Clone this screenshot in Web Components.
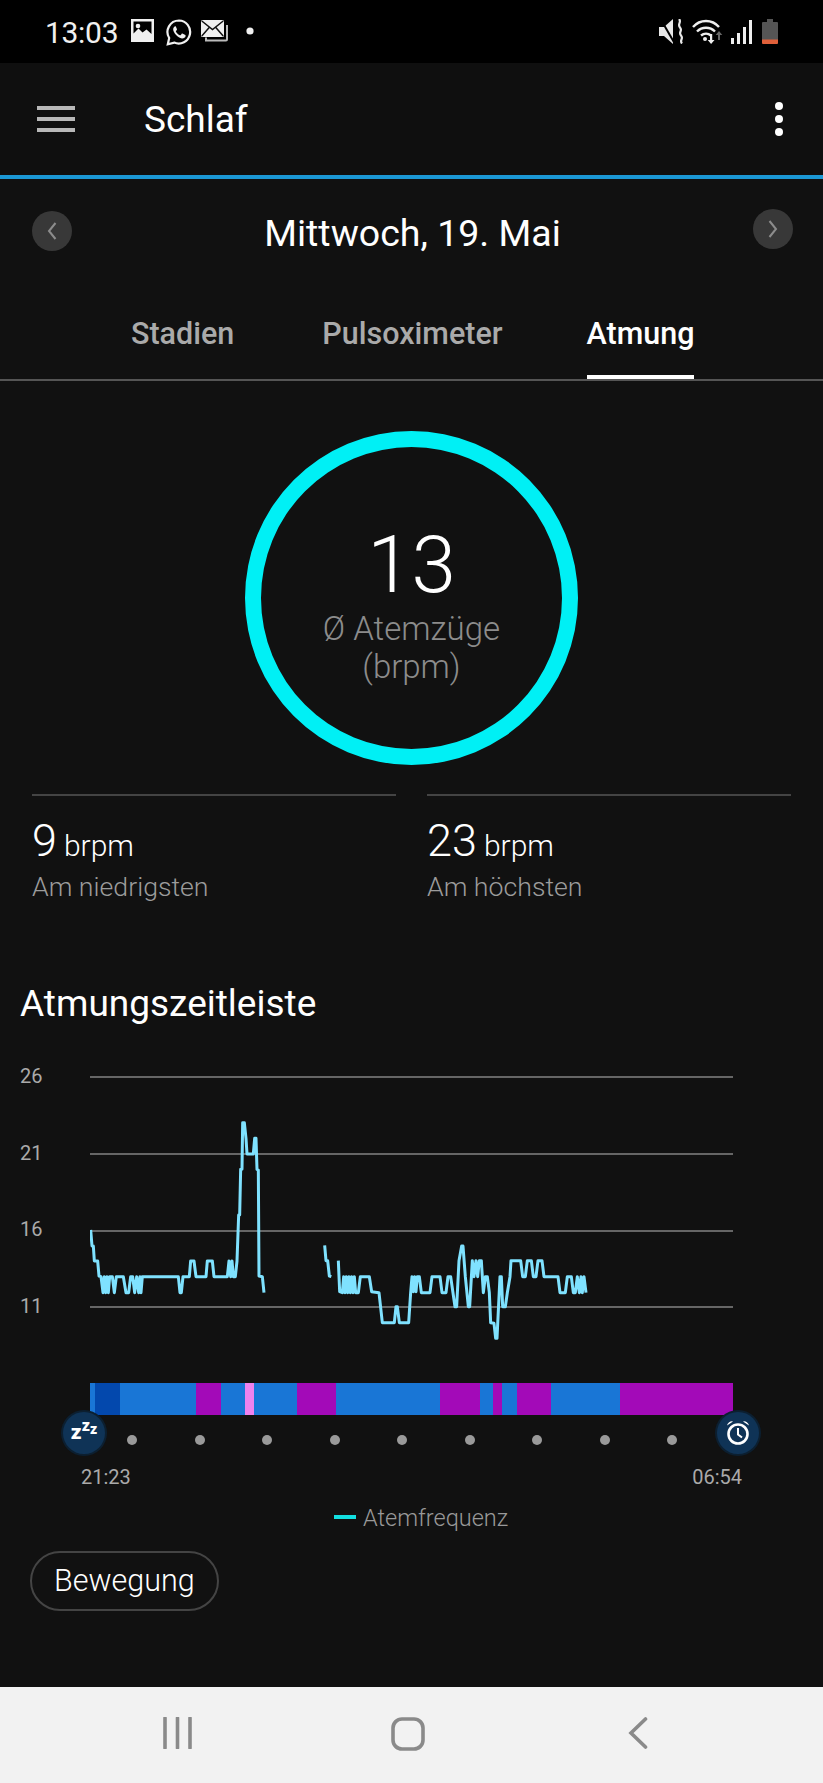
<!DOCTYPE html>
<html lang="de">
<head>
<meta charset="utf-8">
<title>Schlaf</title>
<style>
html,body{margin:0;padding:0;background:#111;}
body{width:823px;height:1783px;overflow:hidden;display:flex;flex-direction:column;font-family:Roboto,"Liberation Sans",sans-serif;color:#fff;}
</style>
</head>
<body>
<status-bar></status-bar>
<app-header title="Schlaf"></app-header>
<date-nav>Mittwoch, 19. Mai</date-nav>
<tab-bar></tab-bar>
<ring-summary value="13"><span>Ø Atemzüge</span><span>(brpm)</span></ring-summary>
<stat-pair></stat-pair>
<timeline-chart></timeline-chart>
<sleep-rail></sleep-rail>
<chart-legend>Atemfrequenz</chart-legend>
<chip-button>Bewegung</chip-button>
<nav-bar></nav-bar>
<script>
function def(name, html){
  customElements.define(name, class extends HTMLElement{
    constructor(){super();const r=this.attachShadow({mode:'open'});r.innerHTML=typeof html==='function'?html(this):html;}
  });
}
def('status-bar',`<style>
:host{display:flex;height:63px;background:#000;align-items:center;box-sizing:border-box;padding:0 45px 0 45px;flex:none;color:#f0f0f0}
.t{font-size:30px;line-height:62px;font-weight:400;letter-spacing:-.3px;width:86px;position:relative;top:1px}
svg{display:block;flex:none}
.sp{flex:1}
</style>
<span class="t">13:03</span>
<svg width="23" height="23" viewBox="0 0 23 23" style="margin-right:12px;margin-top:-2px"><path fill="#f0f0f0" fill-rule="evenodd" d="M0 0h23v23H0zM2.500 2.500v12l5-5 4 4 4-3 5 4.500V2.500z"/><circle cx="7" cy="7" r="2.300" fill="#f0f0f0"/></svg>
<svg width="26" height="27" viewBox="0 0 26 27" style="margin-right:9px;margin-top:1px"><path fill="none" stroke="#f0f0f0" stroke-width="2.200" d="M13 1.500a11.500 11.500 0 0 0-9.800 17.500L1.800 25.300l6.400-1.700A11.500 11.500 0 1 0 13 1.500z"/><path fill="#f0f0f0" d="M9 7.200c-.8.300-2 1.700-1.800 3.600.3 3.200 4.600 8 8.700 8.600 1.800.2 3.300-1 3.600-2 .2-.7.100-1.200-.1-1.300l-3-1.500c-.4-.1-.6 0-.8.300l-1 1.300c-.2.200-.4.200-.7.100-1.500-.6-3.300-2.200-4-3.800-.1-.3-.1-.5.100-.6l.8-1c.2-.3.200-.5.100-.8L9.800 7.500c-.2-.3-.4-.4-.8-.3z"/></svg>
<svg width="28" height="22" viewBox="0 0 28 22" style="margin-top:-1px"><path fill="none" stroke="#bbb" stroke-width="2" d="M26 5v14.500a1 1 0 0 1-1 1H5v-3"/><path fill="#f0f0f0" d="M0 1.500A1.500 1.500 0 0 1 1.500 0h20A1.500 1.500 0 0 1 23 1.500v14a1.500 1.500 0 0 1-1.500 1.500h-20A1.500 1.500 0 0 1 0 15.500z"/><path fill="none" stroke="#111" stroke-width="1.500" d="M.8 1l10.700 8.500L22.200 1M.8 16l7.400-8.500M22.200 16l-7.400-8.500"/></svg>
<svg width="8" height="8" viewBox="0 0 8 8" style="margin-left:17px;margin-top:-2px"><circle cx="4" cy="4" r="3.600" fill="#f0f0f0"/></svg>
<span class="sp"></span>
<svg width="25" height="25" viewBox="0 0 25 25" style="margin-right:8px"><path fill="#e8e8e8" d="M0 8h5l9-8v25l-9-8H0z"/><path fill="none" stroke="#000" stroke-width="2" d="M1-1l15 26"/><path fill="none" stroke="#e8e8e8" stroke-width="2.200" d="M20 0c3 3-2 5 1 8.500s-2 4.500 1 8-2 4.500 1 8"/></svg>
<svg width="31" height="25" viewBox="0 0 31 25" style="margin-right:8px"><g fill="none" stroke="#eee" stroke-width="2.400"><path d="M1 8c7-8 19-8 26 0"/><path d="M5 12.500c5-5 13-5 18 0"/><path d="M9 16.500c3-2.500 7-2.500 10 0"/></g><circle cx="13" cy="20" r="2" fill="#eee"/><path fill="#eee" d="M18 15h2.200v6h2.300l-3.400 4-3.400-4H18z"/><path fill="#666" d="M26 21v-5h-2.300l3.300-4 3.300 4H28v5z"/></svg>
<svg width="22" height="24" viewBox="0 0 22 24" style="margin-right:9px"><g fill="#eee"><rect x="0" y="18" width="3" height="6"/><rect x="6" y="13" width="3" height="11"/><rect x="12" y="7" width="3" height="17"/><rect x="18" y="0" width="3" height="24"/></g></svg>
<svg width="16" height="25" viewBox="0 0 16 25"><path fill="#555" d="M5 0h6v3h4a1 1 0 0 1 1 1v17H0V4a1 1 0 0 1 1-1h4z"/><path fill="#e0603a" d="M0 20.500h16V24a1 1 0 0 1-1 1H1a1 1 0 0 1-1-1z"/></svg>`);
def('app-header',h=>`<style>
:host{display:flex;height:112px;background:#0f0f0f;border-bottom:4px solid #1b98d5;align-items:center;flex:none;padding-left:37px;padding-right:38px}
.m{width:38px;height:26px;display:flex;flex-direction:column;justify-content:space-between;margin-top:0}
.m i{display:block;height:4px;background:#b8b8b8}
h1{font:400 37px/48px Roboto,sans-serif;margin:0 0 0 69px;flex:1;color:#fff;position:relative;top:1px}
.d{display:flex;flex-direction:column;gap:5px;width:10px;margin-top:0}
.d i{display:block;width:8px;height:8px;border-radius:50%;background:#fff}
</style>
<span class="m"><i></i><i></i><i></i></span>
<h1>${h.getAttribute('title')}</h1>
<span class="d"><i></i><i></i><i></i></span>`);
def('date-nav',`<style>
:host{display:flex;height:91px;align-items:center;justify-content:space-between;padding:0 30px 0 32px;flex:none;box-sizing:border-box;background:#111}
.b{width:40px;height:40px;border-radius:50%;background:#383838;display:flex;align-items:center;justify-content:center}
.p{margin-top:12px}.n{margin-top:8px}
.x{font:400 37.500px/46px Roboto,sans-serif;color:#fff;margin-top:16px;position:relative;left:0}
svg{display:block}
</style>
<span class="b p"><svg width="12" height="20" viewBox="0 0 12 20"><path d="M9.500 2L3 10l6.500 8" fill="none" stroke="#8c8c8c" stroke-width="2"/></svg></span>
<span class="x"><slot></slot></span>
<span class="b n"><svg width="12" height="20" viewBox="0 0 12 20"><path d="M2.500 2L9 10l-6.500 8" fill="none" stroke="#8c8c8c" stroke-width="2"/></svg></span>`);
def('tab-bar',`<style>
:host{display:flex;height:111px;box-sizing:border-box;border-bottom:2px solid #555;flex:none;position:relative;padding-left:131px}
.t{font:500 30.500px/36px Roboto,sans-serif;color:#aaa;padding-top:46px;box-sizing:border-box;height:109px}
.a{color:#fff;border-bottom:4px solid #fff}
.s1{margin-right:88px}
.s2{margin-right:84px}
</style>
<span class="t s1">Stadien</span><span class="t s2">Pulsoximeter</span><span class="t a">Atmung</span>`);
def('ring-summary',h=>`<style>
:host{display:flex;justify-content:center;flex:none;padding-top:50px}
.r{width:333px;height:334px;border:16px solid #00f0f5;border-radius:50%;box-sizing:border-box;display:flex;flex-direction:column;align-items:center}
.v{font:300 80px/94px Roboto,sans-serif;color:#fff;margin-top:71px}
.l{display:flex;flex-direction:column;align-items:center;font:300 33px/37.500px Roboto,sans-serif;color:#8c8c8c;margin-top:-2px}
::slotted(span){display:block}
</style>
<div class="r"><div class="v">${h.getAttribute('value')}</div><div class="l"><slot></slot></div></div>`);
def('stat-pair',`<style>
:host{display:flex;gap:31px;padding:29px 32px 0;flex:none}
.c{flex:1;border-top:2px solid #444;padding-top:18px}
.n{font:300 45px/54px Roboto,sans-serif;color:#fff;display:flex;align-items:baseline;gap:7px;height:54px}
.n span{font-size:30px;line-height:30px}
.s{font:300 26.700px/32px Roboto,sans-serif;color:#9c9c9c;margin-top:3px}
</style>
<div class="c"><div class="n"><b style="font-weight:300">9</b><span>brpm</span></div><div class="s">Am niedrigsten</div></div>
<div class="c"><div class="n"><b style="font-weight:300">23</b><span>brpm</span></div><div class="s">Am höchsten</div></div>`);
def('timeline-chart',`<style>
:host{display:flex;flex-direction:column;flex:none;padding-top:79px}
h2{font:400 37px/44px Roboto,sans-serif;margin:0 0 0 20px;color:#fff;height:44px}
.g{display:grid;grid-template-columns:90px 643px;height:323px;margin-top:34px}
.y{display:flex;flex-direction:column;gap:56.700px;padding:6px 0 0 20px;font:400 20px/20px Roboto,sans-serif;color:#aaa}
svg{display:block}
</style>
<h2>Atmungszeitleiste</h2>
<div class="g"><div class="y"><span>26</span><span>21</span><span>16</span><span>11</span></div>
<svg width="643" height="323" viewBox="90 1060 643 323">
<g stroke="#666" stroke-width="2"><path d="M90 1077H733M90 1154H733M90 1231H733M90 1307H733"/></g>
<g transform="translate(0 1040) scale(.33333)" fill="none" stroke="#7fe2ff" stroke-width="9" stroke-linejoin="round">
<polyline points="272,570 276,618 280,618 283,663 293,663 297,708 303,710 309,758 313,710 317,758 321,710 325,758 329,710 337,710 343,758 349,710 370,710 378,758 386,758 392,710 398,710 404,758 410,710 416,758 420,710 423,758 427,710 535,710 540,758 544,758 549,710 568,710 572,663 582,663 588,710 618,710 622,663 637,663 642,710 682,710 687,663 692,710 696,663 700,710 706,710 711,663 716,525 719,525 722,388 726,388 728,248 733,248 738,295 741,342 760,342 764,295 768,295 771,388 775,390 777,708 787,710 792,758"/>
<polyline points="974,616 978,662 983,662 988,708 994,710"/>
<polyline points="1015,662 1019,755 1027,758 1031,710 1035,758 1039,710 1043,758 1047,710 1051,758 1055,710 1059,758 1063,710 1067,758 1075,758 1081,710 1108,710 1115,755 1137,758 1147,848 1183,848 1188,800 1192,800 1198,848 1226,848 1232,758 1236,710 1240,755 1244,710 1248,755 1252,710 1258,710 1264,758 1290,758 1296,710 1320,710 1326,758 1338,758 1344,710 1352,710 1365,800 1370,800 1377,662 1385,618 1389,618 1396,710 1405,800 1409,800 1417,662 1422,710 1428,662 1433,710 1438,662 1444,662 1450,758 1456,710 1462,710 1468,758 1472,848 1482,850 1487,895 1491,895 1500,710 1504,710 1508,800 1516,800 1522,758 1530,710 1533,662 1562,662 1568,710 1576,710 1582,662 1594,662 1600,710 1608,710 1614,662 1626,662 1632,710 1674,710 1680,758 1696,758 1702,710 1714,710 1720,758 1726,758 1732,710 1738,758 1743,710 1747,758 1752,710 1758,758"/>
</g></svg></div>`);
const segs=[[4.5,'b'],[25.5,'d'],[76,'b'],[24.5,'p'],[24.500,'b'],[8.500,'k'],[43.500,'b'],[39,'p'],[104,'b'],[40,'p'],[13,'b'],[9,'p'],[14.500,'b'],[34.500,'p'],[69,'b'],[113,'p']];
def('sleep-rail',`<style>
:host{display:block;position:relative;flex:none;height:120px}
.s{display:flex;height:32px;margin-left:90px;width:643px}
.s i{display:block;flex:none}
.b{background:#1976d6}.d{background:#0348ad}.p{background:#a30ab8}.k{background:#ee82ee}
.o{display:flex;gap:57.500px;padding:20px 0 0 127px}
.o i{display:block;width:10px;height:10px;border-radius:50%;background:#9a9a9a;flex:none}
.e{position:absolute;top:29px;width:42px;height:42px;border-radius:50%;background:#0f3356;box-shadow:0 0 0 2px #0c1f30;display:flex;align-items:center;justify-content:center}
.l{left:63px}.rr{left:717px}
.z{color:#fff;font:700 21px/20px Roboto,sans-serif;display:flex;align-items:flex-end;position:relative;top:-1px}
.z b:nth-child(2){font-size:16px;position:relative;top:-6px}
.z b:nth-child(3){font-size:14px;position:relative;top:-3px}
.q{display:flex;justify-content:space-between;padding:35px 81px 0 81px;font:400 20px/24px Roboto,sans-serif;color:#aaa;position:relative;top:-15px}
svg{display:block}
</style>
<div class="s">${segs.map(s=>`<i class="${s[1]}" style="width:${s[0]}px"></i>`).join('')}</div>
<div class="o"><i></i><i></i><i></i><i></i><i></i><i></i><i></i><i></i><i></i></div>
<div class="e l"><span class="z"><b>z</b><b>z</b><b>z</b></span></div>
<div class="e rr"><svg width="26" height="30" viewBox="0 0 26 30"><circle cx="13" cy="16" r="9.500" fill="none" stroke="#fff" stroke-width="2.600"/><path d="M13 10v6.500l4 3" fill="none" stroke="#fff" stroke-width="2"/><path d="M2 7.500a5 5 0 0 1 6-4zM24 7.500a5 5 0 0 0-6-4z" fill="#fff"/></svg></div>
<div class="q"><span>21:23</span><span>06:54</span></div>`);
def('chart-legend',`<style>
:host{display:flex;align-items:center;gap:7px;flex:none;font:300 23.500px/30px Roboto,sans-serif;color:#999;padding-left:334px}
i{display:block;width:22px;height:4px;background:#12dfe0;margin-top:-2px}
</style><i></i><slot></slot>`);
def('chip-button',`<style>
:host{display:block;align-self:flex-start;flex:none;margin:18px 0 0 30px;height:60px;box-sizing:border-box;border:2px solid #444;border-radius:30px;padding:0 22px;font:300 30.500px/56px Roboto,sans-serif;color:#fff}
</style><slot></slot>`);
def('nav-bar',`<style>
:host{display:flex;position:absolute;left:0;right:0;top:1687px;height:96px;background:#f2f2f2;}
svg{position:absolute;top:30px}
</style>
<svg style="left:163px" width="30" height="32" viewBox="0 0 30 32"><path d="M2 1v30M14.500 1v30M27 1v30" stroke="#8a8a8a" stroke-width="3.600" stroke-linecap="round"/></svg>
<svg style="left:391px" width="34" height="34" viewBox="0 0 34 34"><rect x="2" y="2" width="30" height="30" rx="9" fill="none" stroke="#8a8a8a" stroke-width="3.600"/></svg>
<svg style="left:627px" width="22" height="32" viewBox="0 0 22 32"><path d="M18.500 2L4 16l14.500 14" fill="none" stroke="#8a8a8a" stroke-width="3.600" stroke-linecap="round"/></svg>`);
</script>
</body>
</html>
